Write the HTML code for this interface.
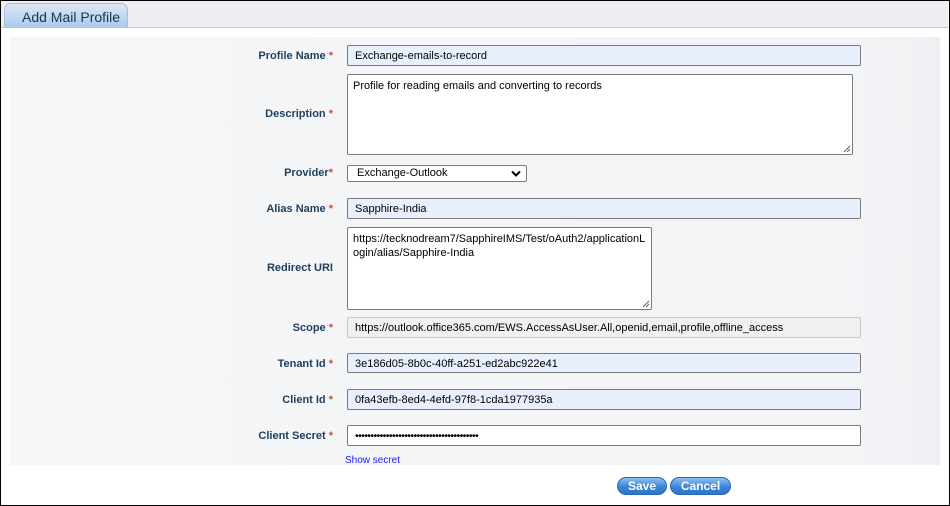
<!DOCTYPE html>
<html><head><meta charset="utf-8"><style>
*{box-sizing:border-box;margin:0;padding:0}
body{width:950px;height:506px;overflow:hidden;background:#fff;font-family:"Liberation Sans",Arial,sans-serif;font-size:11px;position:relative}
.frame{position:absolute;left:0;top:0;width:950px;height:506px;border:1px solid #000}
.hdr{position:absolute;left:1px;top:1px;width:947px;height:27px;background:#eceef2;border-bottom:1px solid #c4c8cf}
.tab{position:absolute;left:4px;top:3px;width:124px;height:25px;border:1px solid #a9bdd4;border-bottom:none;border-radius:7px 7px 0 0;background:linear-gradient(#dbe8f7,#a9c9ec);color:#1e3550;font-size:14px;padding:5px 0 0 17px}
.area{position:absolute;left:10px;top:37px;width:930px;height:428px;background:linear-gradient(90deg,#f5f6f8,#f3f4f6 90%,#eef0f3)}
.lbl{position:absolute;right:617px;color:#1f3e5c;font-weight:bold;font-size:11px;white-space:nowrap}
.lbl b{color:#e0452a;font-weight:bold}
.in{position:absolute;left:347px;border:1px solid #7a7a7a;border-radius:2px;background:#e8f0fe;color:#000;font-size:11px;padding:4px 7px;white-space:pre}
.ta{background:#fff;padding:4px 5px;white-space:normal;line-height:14px;word-break:break-all}
.btn{position:absolute;top:477px;height:18px;border-radius:9px;background:linear-gradient(#8dc0f2,#3c86d8 55%,#2b74c9);border:1px solid #2a68b5;color:#fff;font-weight:bold;font-size:12px;text-align:center;line-height:16px}
.grip{position:absolute;right:1px;bottom:1px}
</style></head><body>
<div class="hdr"></div>
<div class="tab">Add Mail Profile</div>
<div class="area"></div>

<div class="lbl" style="top:50px">Profile Name <b>*</b></div>
<div class="in" style="top:45px;width:514px;height:21px">Exchange-emails-to-record</div>

<div class="lbl" style="top:108px">Description <b>*</b></div>
<div class="in ta" style="top:74px;width:506px;height:81px">Profile for reading emails and converting to records<svg class="grip" width="8" height="8"><path d="M7 1L1 7M7 4L4 7" stroke="#666"/></svg></div>

<div class="lbl" style="top:167px">Provider<b>*</b></div>
<div class="in" style="top:165px;width:180px;height:17px;background:#fff;padding:1px 9px">Exchange-Outlook<svg style="position:absolute;right:5px;top:4px" width="10" height="7" viewBox="0 0 10 7"><path d="M1 1.5L5 5.5 9 1.5" stroke="#000" stroke-width="2" fill="none"/></svg></div>

<div class="lbl" style="top:203px">Alias Name <b>*</b></div>
<div class="in" style="top:198px;width:514px;height:21px">Sapphire-India</div>

<div class="lbl" style="top:262px">Redirect URI</div>
<div class="in ta" style="top:227px;width:305px;height:83px">https://tecknodream7/SapphireIMS/Test/oAuth2/applicationLogin/alias/Sapphire-India<svg class="grip" width="8" height="8"><path d="M7 1L1 7M7 4L4 7" stroke="#666"/></svg></div>

<div class="lbl" style="top:322px">Scope <b>*</b></div>
<div class="in" style="top:317px;width:514px;height:21px;background:#f0f0f0;border-color:#c8c8c8">https://outlook.office365.com/EWS.AccessAsUser.All,openid,email,profile,offline_access</div>

<div class="lbl" style="top:358px">Tenant Id <b>*</b></div>
<div class="in" style="top:353px;width:514px;height:20px">3e186d05-8b0c-40ff-a251-ed2abc922e41</div>

<div class="lbl" style="top:394px">Client Id <b>*</b></div>
<div class="in" style="top:389px;width:514px;height:21px">0fa43efb-8ed4-4efd-97f8-1cda1977935a</div>

<div class="lbl" style="top:430px">Client Secret <b>*</b></div>
<div class="in" style="top:425px;width:514px;height:21px;background:#fff;font-size:10.5px;padding-top:4px;letter-spacing:-0.6px">••••••••••••••••••••••••••••••••••••••••</div>

<div style="position:absolute;left:345px;top:455px;color:#1a1aff;font-size:10px">Show secret</div>

<div class="btn" style="left:617px;width:50px">Save</div>
<div class="btn" style="left:670px;width:61px">Cancel</div>
<div class="frame"></div>
</body></html>
